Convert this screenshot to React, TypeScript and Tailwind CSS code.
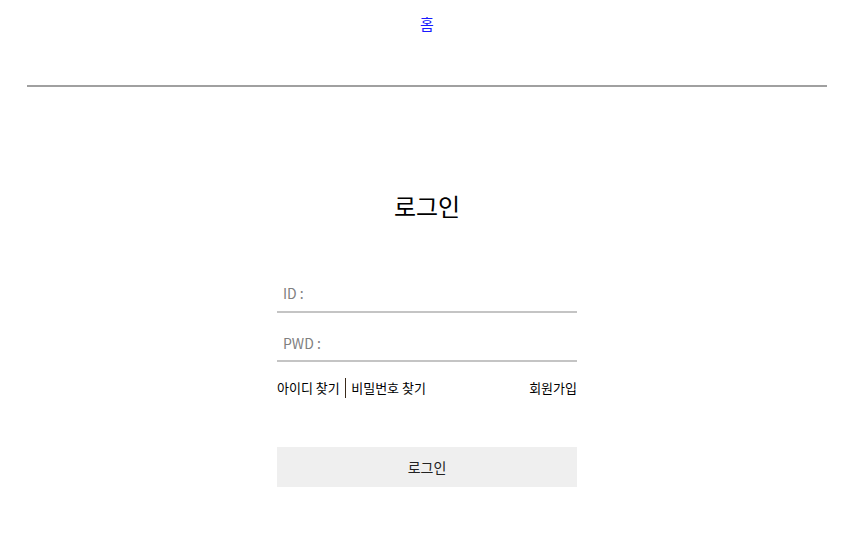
import { useState } from 'react';

const FONT = { fontFamily: '"Noto Sans CJK KR", "Noto Sans", sans-serif' };

export default function App() {
  const [id, setId] = useState('');
  const [pwd, setPwd] = useState('');

  return (
    <div className="min-h-screen bg-white text-black" style={FONT}>
      {/* 상단 메뉴 */}
      <header className="pt-[11px] text-center">
        <a href="#" className="text-[15px] leading-[22px] text-[#1a1aff] no-underline">
          홈
        </a>
      </header>
      <hr className="mx-auto mt-[50px] w-[800px] border-t-2 border-[#a0a0a0]" />

      {/* 로그인 폼 */}
      <main className="mx-auto w-[300px]">
        <h1 className="mt-[103px] text-center text-[24px] leading-[32px]">로그인</h1>

        <div className="mt-[51px] flex flex-col gap-[10px]">
          <input
            value={id}
            onChange={(e) => setId(e.target.value)}
            placeholder="ID :"
            className="h-[40px] w-full border-b-2 border-[#c4c4c4] px-[6px] pt-[2px] text-[14px] outline-none placeholder:text-[#808080]"
          />
          <input
            type="password"
            value={pwd}
            onChange={(e) => setPwd(e.target.value)}
            placeholder="PWD :"
            className="h-[39px] w-full border-b-2 border-[#c4c4c4] px-[6px] pt-[2px] text-[14px] outline-none placeholder:text-[#808080]"
          />
        </div>

        <div className="mt-[14px] flex items-center justify-between text-[13px] leading-[24px]">
          <div className="flex items-center">
            <a href="#">아이디 찾기</a>
            <span className="mx-[5px] h-[20px] w-[1.5px] bg-[#3a2a1a]" />
            <a href="#">비밀번호 찾기</a>
          </div>
          <a href="#">회원가입</a>
        </div>

        <button className="mt-[47px] h-[40px] w-full bg-[#efefef] text-[14px] text-[#222]">
          로그인
        </button>
      </main>
    </div>
  );
}
